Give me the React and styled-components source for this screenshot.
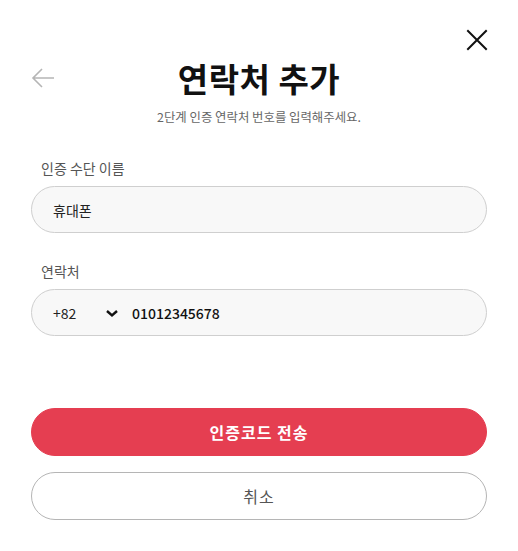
import styled, { createGlobalStyle } from "styled-components"

const red = '#e53e51';
const font = '"Noto Sans CJK KR", "Noto Sans", sans-serif';

const GlobalStyle = createGlobalStyle`
    body {
        margin: 0;
        background: #fff;
        font-family: ${font};
    }
`

const Modal = styled.div`
    width: 518px;
    height: 551px;
    box-sizing: border-box;
    padding: 27px 31px 0 31px;
    display: flex;
    flex-direction: column;
`

const TopBar = styled.div`
    display: flex;
    justify-content: flex-end;
    height: 26px;
    margin-right: -2px;
`

const IconButton = styled.button`
    border: none;
    background: none;
    padding: 0;
    display: flex;
    align-items: center;
    justify-content: flex-start;
    cursor: pointer;
    color: ${props => props.muted ? '#b5b5b5' : '#111'};
`

const Header = styled.div`
    display: grid;
    grid-template-columns: 40px 1fr 40px;
    align-items: center;
    height: 50px;
`

const Title = styled.h1`
    margin: 0;
    text-align: center;
    font-size: 33px;
    font-weight: 700;
    color: #111;
    letter-spacing: 0.5px;
`

const Subtitle = styled.p`
    margin: 5px 0 0;
    text-align: center;
    font-size: 12.4px;
    color: #666;
`

const Form = styled.div`
    margin-top: 32px;
    display: flex;
    flex-direction: column;
`

const Label = styled.label`
    font-size: 14px;
    color: #555;
    padding-left: 10px;
    margin-bottom: 8px;
    margin-top: ${props => props.spaced ? '28px' : '0'};
`

const Field = styled.div`
    height: 47px;
    box-sizing: border-box;
    border: 1px solid #cfcfcf;
    border-radius: 24px;
    background: #f8f8f8;
    display: flex;
    align-items: center;
    padding: 0 21px;
    font-size: 14px;
    color: #222;
`

const Code = styled.span`
    width: 52px;
    color: #222;
`

const Chevron = styled.span`
    display: flex;
    width: 27px;
`

const Number = styled.span`
    font-weight: 500;
    color: #111;
`

const Actions = styled.div`
    margin-top: 72px;
    display: flex;
    flex-direction: column;
    gap: 16px;
`

const Button = styled.button`
    height: 48px;
    border-radius: 24px;
    font-family: ${font};
    font-size: 16px;
    letter-spacing: 1px;
    cursor: pointer;
    background: ${props => props.primary ? red : '#fff'};
    color: ${props => props.primary ? '#fff' : '#555'};
    font-weight: ${props => props.primary ? 700 : 400};
    border: 1px solid ${props => props.primary ? red : '#b5b5b5'};
`

export default function App() {
    return (
        <>
            <GlobalStyle />
            <Modal>
                <TopBar>
                    <IconButton aria-label="닫기">
                        <svg width="24" height="24" viewBox="0 0 24 24" fill="none" stroke="currentColor" strokeWidth="2" strokeLinecap="square">
                            <path d="M3 3 L21 21 M21 3 L3 21" />
                        </svg>
                    </IconButton>
                </TopBar>
                <Header>
                    <IconButton muted aria-label="뒤로">
                        <svg width="24" height="22" viewBox="0 0 24 22" fill="none" stroke="currentColor" strokeWidth="1.6">
                            <path d="M23 11 H2 M11 2 L2 11 L11 20" />
                        </svg>
                    </IconButton>
                    <Title>연락처 추가</Title>
                    <span />
                </Header>
                <Subtitle>2단계 인증 연락처 번호를 입력해주세요.</Subtitle>
                <Form>
                    <Label>인증 수단 이름</Label>
                    <Field>휴대폰</Field>
                    <Label spaced>연락처</Label>
                    <Field>
                        <Code>+82</Code>
                        <Chevron>
                            <svg width="14" height="10" viewBox="0 0 14 10" fill="none" stroke="#111" strokeWidth="2.4">
                                <path d="M2 3 L7 7.5 L12 3" />
                            </svg>
                        </Chevron>
                        <Number>01012345678</Number>
                    </Field>
                </Form>
                <Actions>
                    <Button primary>인증코드 전송</Button>
                    <Button>취소</Button>
                </Actions>
            </Modal>
        </>
    )
}
